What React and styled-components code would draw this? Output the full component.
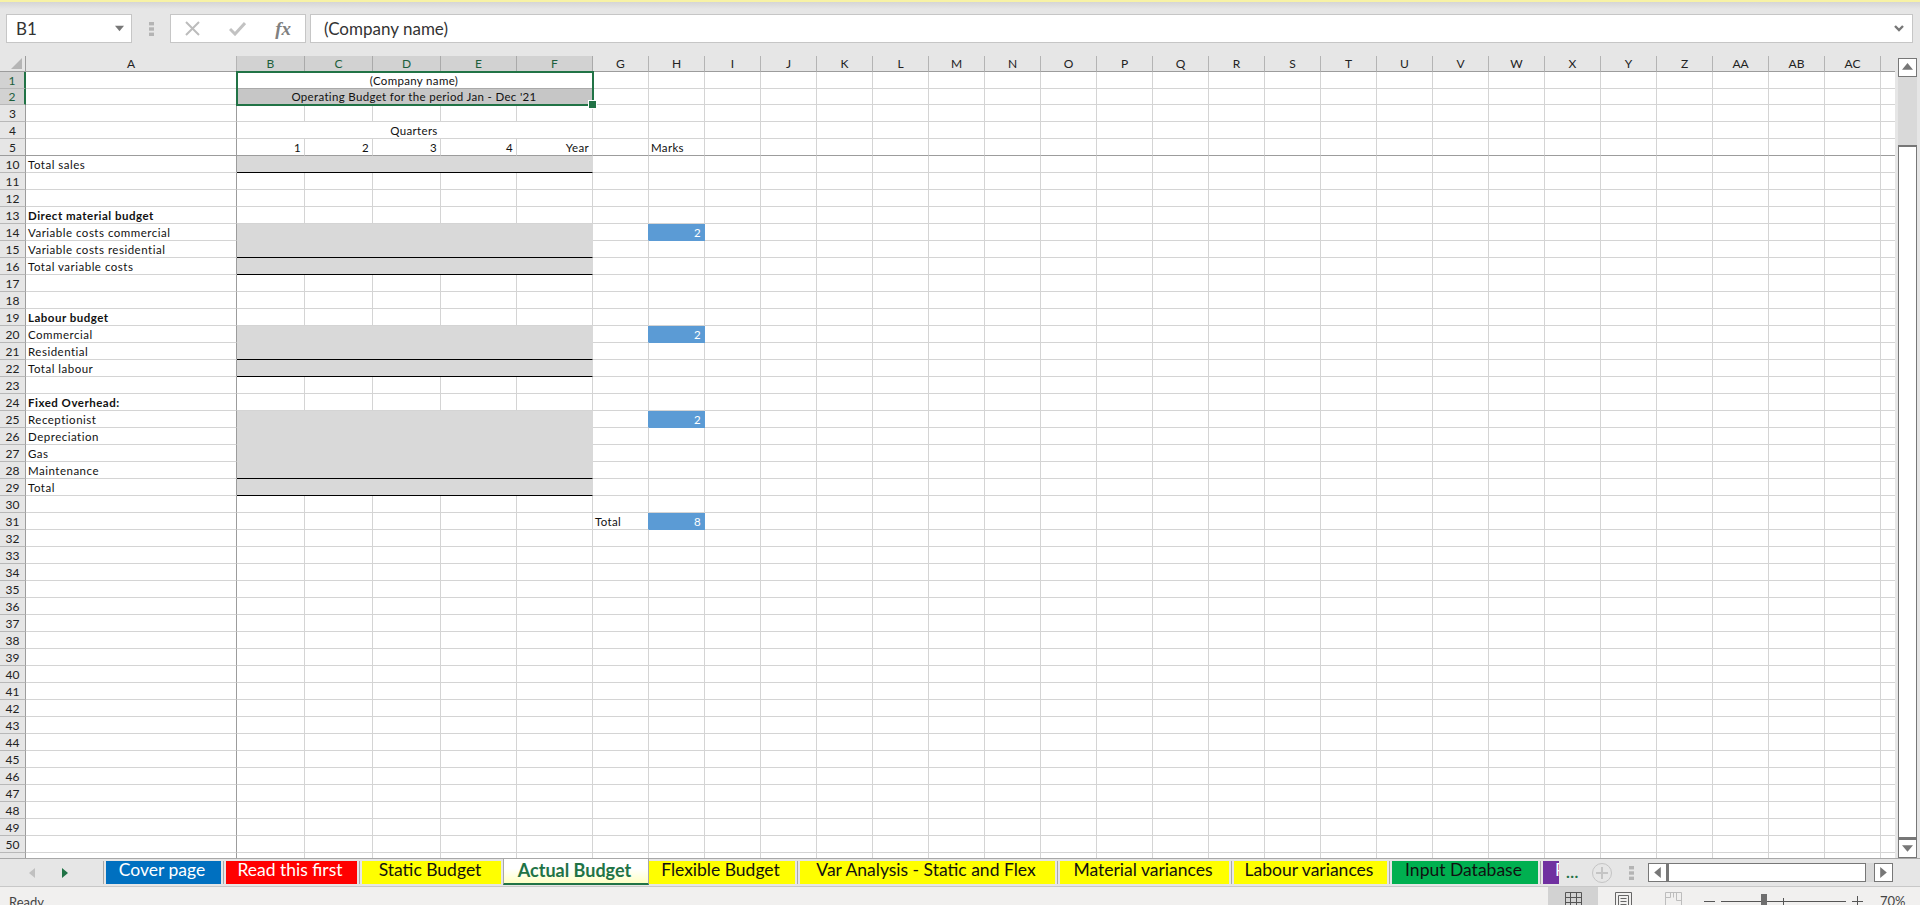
import React from "react"
import styled, { createGlobalStyle } from "styled-components"

const GlobalStyle = createGlobalStyle`
  html, body {
    margin: 0;
    padding: 0;
    background: #e6e6e6;
  }
  * {
    box-sizing: border-box;
  }
`

const GREEN = "#217346"
const GRID = "#d4d4d4"
const FREEZE = "#9c9c9c"
const FILL = "#d9d9d9"
const BLUE = "#5b9bd5"
const FONT = `Lato, "Open Sans", "Liberation Sans", sans-serif`

const COLUMNS = [
  ["A", 211], ["B", 68], ["C", 68], ["D", 68], ["E", 76], ["F", 76],
  ...["G", "H", "I", "J", "K", "L", "M", "N", "O", "P", "Q", "R", "S", "T", "U", "V", "W", "X", "Y", "Z", "AA", "AB", "AC"].map((n) => [n, 56]),
  ["", 15],
]
const ROWS = [1, 2, 3, 4, 5]
for (let r = 10; r <= 51; r++) ROWS.push(r)

const SELECTED_COLS = ["B", "C", "D", "E", "F"]
const FILL_ROWS = [10, 14, 15, 16, 20, 21, 22, 25, 26, 27, 28, 29]
const RULE_ROWS = [10, 15, 16, 21, 22, 28, 29]
const BOLD_ROWS = [13, 19, 24]
const MARK_ROWS = [14, 20, 25, 31]

const CONTENT = {
  A10: "Total sales",
  A13: "Direct material budget",
  A14: "Variable costs commercial",
  A15: "Variable costs residential",
  A16: "Total variable costs",
  A19: "Labour budget",
  A20: "Commercial",
  A21: "Residential",
  A22: "Total labour",
  A24: "Fixed Overhead:",
  A25: "Receptionist",
  A26: "Depreciation",
  A27: "Gas",
  A28: "Maintenance",
  A29: "Total",
  B5: "1",
  C5: "2",
  D5: "3",
  E5: "4",
  F5: "Year",
  H5: "Marks",
  G31: "Total",
  H14: "2",
  H20: "2",
  H25: "2",
  H31: "8",
}
const MERGED = {
  1: { text: "(Company name)", bottom: "#a9a9a9" },
  2: { text: "Operating Budget for the period Jan - Dec '21", fill: "#c6c6c6" },
  4: { text: "Quarters" },
}

const TABS = [
  { name: "Cover page", bg: "#0070c0", color: "#fff", width: 115 },
  { name: "Read this first", bg: "#ff0000", color: "#fff", width: 131 },
  { name: "Static Budget", bg: "#ffff00", color: "#111", width: 139 },
  { name: "Actual Budget", active: true, width: 146 },
  { name: "Flexible Budget", bg: "#ffff00", color: "#111", width: 146, noSep: true },
  { name: "Var Analysis - Static and Flex", bg: "#ffff00", color: "#111", width: 255 },
  { name: "Material variances", bg: "#ffff00", color: "#111", width: 169 },
  { name: "Labour variances", bg: "#ffff00", color: "#111", width: 153 },
  { name: "Input Database", bg: "#00b050", color: "#111", width: 146 },
  { name: "Provisions", bg: "#7030a0", color: "#fff", width: 16, clipped: true },
]

const Page = styled.div`
  width: 1920px;
  height: 905px;
  overflow: hidden;
  display: flex;
  flex-direction: column;
  background: #e6e6e6;
  font-family: ${FONT};
`

const FormulaBar = styled.div`
  height: 56px;
  flex: none;
  display: flex;
  align-items: flex-start;
  padding: 12px 7px 0 6px;
  border-top: 2px solid #f7f2a6;
  background: linear-gradient(#d5d5d5 0, #e6e6e6 7px);
`

const WhiteBox = styled.div`
  height: 29px;
  background: #fff;
  border: 1px solid #c6c6c6;
  display: flex;
  align-items: center;
`

const NameBox = styled(WhiteBox)`
  width: 126px;
  padding: 0 7px 0 9px;
  justify-content: space-between;
  font-size: 17px;
  color: #333;
`

const Grip = styled.svg`
  width: 5px;
  height: 14px;
  fill: #b4b4b4;
  flex: none;
  display: block;
`

const BarGrip = styled(Grip)`
  margin: 8px 16px 0 17px;
`

const FxBox = styled(WhiteBox)`
  width: 136px;
  margin-right: 4px;
  padding: 0 14px 0 14px;
  justify-content: space-between;
`

const FxText = styled.span`
  font-family: "Liberation Serif", serif;
  font-style: italic;
  font-weight: 700;
  font-size: 19px;
  color: #808080;
`

const FormulaInput = styled(WhiteBox)`
  flex: 1;
  padding: 0 8px 0 13px;
  justify-content: space-between;
  font-size: 17px;
  color: #333;
`

const Sheet = styled.div`
  height: 802px;
  flex: none;
  display: flex;
`

const GridArea = styled.div`
  width: 1895px;
  height: 802px;
  overflow: hidden;
`

const Grid = styled.div`
  position: relative;
  display: grid;
  grid-template-columns: 26px ${COLUMNS.map((c) => c[1] + "px").join(" ")};
  grid-template-rows: 16px 17px 16px ${ROWS.slice(2).map(() => "17px").join(" ")};
  background: #fff;
  font-size: 11.5px;
  color: #111;
`

const Corner = styled.div`
  background: #e6e6e6;
  border-right: 1px solid ${FREEZE};
  border-bottom: 1px solid ${FREEZE};
  display: flex;
  align-items: flex-end;
  justify-content: flex-end;
  padding: 0 3px 2px 0;
`

const ColHead = styled.div`
  background: ${(p) => (p.$selected ? "#d2d2d2" : "#e6e6e6")};
  color: ${(p) => (p.$selected ? "#1d5f3c" : "#222")};
  border-right: 1px solid ${(p) => (p.$selected ? "#aaa" : "#b4b4b4")};
  border-bottom: 1px solid ${FREEZE};
  display: flex;
  align-items: center;
  justify-content: center;
  font-size: 12px;
`

const RowHead = styled.div`
  background: ${(p) => (p.$selected ? "#d2d2d2" : "#e6e6e6")};
  color: ${(p) => (p.$selected ? "#1d5f3c" : "#222")};
  border-right: ${(p) => (p.$selected ? `2px solid ${GREEN}` : `1px solid ${FREEZE}`)};
  border-bottom: 1px solid ${(p) => (p.$freeze ? FREEZE : "#b8b8b8")};
  display: flex;
  align-items: center;
  justify-content: center;
  font-size: 12px;
`

const Cell = styled.div`
  background: ${(p) => p.$bg || "#fff"};
  color: ${(p) => (p.$mark ? "#fff" : "#111")};
  border-right: 1px solid ${(p) => p.$right};
  border-bottom: 1px solid ${(p) => p.$bottom};
  font-weight: ${(p) => (p.$bold ? 700 : 400)};
  display: flex;
  align-items: center;
  justify-content: ${(p) => p.$justify || "flex-start"};
  padding: 0 3px 0 2px;
  white-space: nowrap;
  overflow: visible;
  letter-spacing: ${(p) => (p.$label ? "0.5px" : "0.33px")};
  ${(p) => p.$span && `grid-column: span ${p.$span};`}
`

// out of flow, so it takes the tracks of B1:F2 without pushing the cells
const Selection = styled.div`
  position: absolute;
  grid-column: 3 / 8;
  grid-row: 2 / 4;
  inset: -1px;
  border: 2px solid ${GREEN};
  z-index: 2;
`

const FillHandle = styled.span`
  position: absolute;
  right: -4px;
  bottom: -4px;
  width: 7px;
  height: 7px;
  background: ${GREEN};
  outline: 1px solid #fff;
`

const ScrollRail = styled.div`
  width: 25px;
  display: flex;
  flex-direction: column;
  padding: 2px 3px 0 3px;
`

const ScrollButton = styled.div`
  width: 19px;
  height: 19px;
  flex: none;
  background: #fff;
  border: 1px solid #777;
  display: flex;
  align-items: center;
  justify-content: center;
`

const ScrollTrack = styled.div`
  height: 68px;
  flex: none;
  background: #d9d9d9;
`

const ScrollThumb = styled.div`
  height: 694px;
  flex: none;
  background: #fff;
  border: 1px solid #777;
  border-width: 2px 1px;
`

const TabStrip = styled.div`
  height: 29px;
  flex: none;
  display: flex;
  align-items: flex-start;
  border-top: 1px solid #a8a8a8;
  border-bottom: 1px solid #c8c8c8;
  background: #e6e6e6;
`

const TabNav = styled.div`
  width: 103px;
  height: 27px;
  flex: none;
  display: flex;
  align-items: center;
  padding-left: 27px;
  gap: 23px;
`

const Tabs = styled.div`
  display: flex;
  align-items: flex-start;
  gap: 2px;
  padding-top: 2px;
  width: 1459px;
  flex: none;
`

const TabSep = styled.span`
  width: 1px;
  height: 23px;
  flex: none;
  background: #a8a8a8;
`

const Tab = styled.div`
  width: ${(p) => p.$w}px;
  height: 23px;
  flex: none;
  background: ${(p) => p.$bg};
  color: ${(p) => p.$color};
  font-size: 17.5px;
  line-height: 18px;
  overflow: hidden;
  white-space: nowrap;
  padding: ${(p) => (p.$clipped ? "0 0 0 12px" : "0 3px 0 0")};
  text-align: ${(p) => (p.$clipped ? "left" : "center")};
`

const ActiveTab = styled.div`
  width: ${(p) => p.$w}px;
  height: 26px;
  margin: -2px -2px 0 0;
  padding-right: 3px;
  flex: none;
  background: linear-gradient(#fff 40%, #ffffc4);
  border-left: 1px solid #a8a8a8;
  border-right: 1px solid #a8a8a8;
  border-bottom: 2px solid ${GREEN};
  color: ${GREEN};
  font-weight: 700;
  font-size: 18px;
  line-height: 22px;
  text-align: center;
  white-space: nowrap;
`

const MoreTabs = styled.span`
  width: 19px;
  padding: 0 0 0 4px;
  flex: none;
  color: ${GREEN};
  font-weight: 700;
  font-size: 16px;
  line-height: 26px;
  letter-spacing: 0.5px;
`

const StripTools = styled.div`
  display: flex;
  align-items: center;
  height: 27px;
  flex: none;
`

const AddSheet = styled.div`
  width: 20px;
  height: 20px;
  margin-left: 11px;
  border: 1px solid #c4c4c4;
  border-radius: 50%;
  display: flex;
  align-items: center;
  justify-content: center;
`

const StripGrip = styled(Grip)`
  margin: 0 14px 0 17px;
`

const HScroll = styled.div`
  width: 245px;
  display: flex;
  align-items: center;
`

const HThumb = styled.div`
  width: 199px;
  height: 19px;
  flex: none;
  background: #fff;
  border: 1px solid #777;
  border-left-width: 2px;
`

const HTrack = styled.div`
  width: 8px;
  height: 19px;
  flex: none;
  background: #d9d9d9;
`

const StatusBar = styled.div`
  height: 24px;
  flex: none;
  display: flex;
  align-items: flex-start;
  justify-content: space-between;
  background: #f1f0ef;
  color: #444;
  font-size: 13px;
`

const Ready = styled.span`
  padding: 7px 0 0 9px;
`

const StatusTools = styled.div`
  display: flex;
  align-items: flex-start;
`

const ViewButton = styled.div`
  width: 50px;
  height: 24px;
  background: ${(p) => (p.$active ? "#d2d2d2" : "transparent")};
  display: flex;
  justify-content: center;
  padding-top: 5px;
`

const Zoomer = styled.div`
  width: 222px;
  display: flex;
  align-items: center;
  height: 24px;
  padding: 4px 0 0 6px;
`

const ZoomSign = styled.span`
  width: 11px;
  height: 1px;
  background: #555;
  flex: none;
  position: relative;
  ${(p) =>
    p.$plus &&
    `&::after {
      content: "";
      position: absolute;
      left: 5px;
      top: -5px;
      width: 1px;
      height: 11px;
      background: #555;
    }`}
`

const ZoomSlider = styled.div`
  width: 125px;
  height: 1px;
  background: #555;
  margin: 0 6px;
  position: relative;
  flex: none;
`

const SliderThumb = styled.span`
  position: absolute;
  left: 40px;
  top: -7px;
  width: 6px;
  height: 14px;
  background: #6e6e6e;
`

const SliderTick = styled.span`
  position: absolute;
  left: 62px;
  top: -3px;
  width: 1px;
  height: 7px;
  background: #555;
`

const ZoomValue = styled.span`
  margin-left: 17px;
  font-size: 13px;
`

const Triangle = ({ dir, color = "#777", size = 8 }) => {
  const points = {
    up: "0,7 5,1 10,7",
    down: "0,2 10,2 5,8",
    left: "8,0 8,10 2,5",
    right: "2,0 2,10 8,5",
  }
  return (
    <svg width={size} height={size} viewBox="0 0 10 10" style={{ display: "block", flex: "none" }}>
      <polygon points={points[dir]} fill={color} />
    </svg>
  )
}

const GripDots = ({ as: Comp = BarGrip }) => (
  <Comp viewBox="0 0 5 14">
    <rect width="5" height="3.4" />
    <rect y="5.3" width="5" height="3.4" />
    <rect y="10.6" width="5" height="3.4" />
  </Comp>
)

const CrossIcon = () => (
  <svg width="15" height="15" viewBox="0 0 15 15">
    <path d="M1 1 L14 14 M14 1 L1 14" stroke="#bcbcbc" strokeWidth="2" fill="none" />
  </svg>
)

const CheckIcon = () => (
  <svg width="17" height="15" viewBox="0 0 17 15">
    <path d="M1 8 L6 13 L16 2" stroke="#c2c2c2" strokeWidth="3" fill="none" />
  </svg>
)

const ChevronDown = () => (
  <svg width="10" height="8" viewBox="0 0 10 8">
    <path d="M1 1 L5 5 L9 1" stroke="#777" strokeWidth="2.4" fill="none" />
  </svg>
)

const PlusIcon = () => (
  <svg width="12" height="12" viewBox="0 0 12 12">
    <path d="M6 0 V12 M0 6 H12" stroke="#c4c4c4" strokeWidth="2" fill="none" />
  </svg>
)

const NormalViewIcon = () => (
  <svg width="17" height="16" viewBox="0 0 17 16" fill="none" stroke="#555">
    <path d="M.5 .5 H16.5 V15.5 H.5 Z M.5 5.5 H16.5 M.5 10.5 H16.5 M5.5 .5 V15.5 M11.5 .5 V15.5" />
  </svg>
)

const PageLayoutIcon = () => (
  <svg width="17" height="16" viewBox="0 0 17 16" fill="none" stroke="#666">
    <path d="M.5 .5 H16.5 V15.5 H.5 Z" />
    <path d="M3.5 3.5 H13.5 V15.5 H3.5 Z M5.5 6.5 H11.5 M5.5 9.5 H11.5 M5.5 12.5 H11.5" />
  </svg>
)

const PageBreakIcon = () => (
  <svg width="17" height="16" viewBox="0 0 17 16" fill="none" stroke="#bdbdbd">
    <path d="M.5 .5 H16.5 V15.5 H.5 Z M.5 5.5 H5.5 V.5 M11.5 .5 V8.5 H16.5 M8.5 .5 V5.5" />
  </svg>
)

const cellProps = (col, row) => {
  const isMark = col === "H" && MARK_ROWS.includes(row)
  let bottom = GRID
  if (row === 5) bottom = FREEZE
  if (isMark) bottom = BLUE
  let right = GRID
  if (isMark || (col === "G" && MARK_ROWS.includes(row))) right = BLUE
  if (col === "A" || col === "") right = FREEZE
  const numeric = isMark || (row === 5 && SELECTED_COLS.includes(col))
  return {
    $bg: isMark ? BLUE : undefined,
    $mark: isMark,
    $right: right,
    $bottom: bottom,
    $label: col === "A",
    $bold: col === "A" && BOLD_ROWS.includes(row),
    $justify: numeric ? "flex-end" : undefined,
    children: CONTENT[col + row],
  }
}

// the cell that stands for B:F on merged and shaded rows
const SpanCell = ({ row }) => {
  const merged = MERGED[row]
  if (merged) {
    return (
      <Cell $span={5} $bg={merged.fill} $right={GRID} $bottom={merged.bottom || GRID} $justify="center">
        {merged.text}
      </Cell>
    )
  }
  return <Cell $span={5} $bg={FILL} $right={FILL} $bottom={RULE_ROWS.includes(row) ? "#000" : FILL} />
}

const SheetRow = ({ row }) => {
  const spans = MERGED[row] || FILL_ROWS.includes(row)
  return (
    <>
      <RowHead $selected={row === 1 || row === 2} $freeze={row === 5}>
        {row}
      </RowHead>
      {COLUMNS.map(([col]) => {
        if (spans && SELECTED_COLS.includes(col)) {
          return col === "B" ? <SpanCell key={col} row={row} /> : null
        }
        return <Cell key={col} {...cellProps(col, row)} />
      })}
    </>
  )
}

const App = () => (
  <>
    <GlobalStyle />
    <Page>
      <FormulaBar>
        <NameBox>
          B1
          <Triangle dir="down" color="#777" size={9} />
        </NameBox>
        <GripDots />
        <FxBox>
          <CrossIcon />
          <CheckIcon />
          <FxText>fx</FxText>
        </FxBox>
        <FormulaInput>
          (Company name)
          <ChevronDown />
        </FormulaInput>
      </FormulaBar>

      <Sheet>
        <GridArea>
          <Grid>
            <Corner>
              <svg width="11" height="11" viewBox="0 0 11 11">
                <polygon points="11,0 11,11 0,11" fill="#b5b5b5" />
              </svg>
            </Corner>
            {COLUMNS.map(([col]) => (
              <ColHead key={col || "end"} $selected={SELECTED_COLS.includes(col)}>
                {col}
              </ColHead>
            ))}
            {ROWS.map((row) => (
              <SheetRow key={row} row={row} />
            ))}
            <Selection>
              <FillHandle />
            </Selection>
          </Grid>
        </GridArea>
        <ScrollRail>
          <ScrollButton>
            <Triangle dir="up" size={11} />
          </ScrollButton>
          <ScrollTrack />
          <ScrollThumb />
          <ScrollButton>
            <Triangle dir="down" size={11} />
          </ScrollButton>
        </ScrollRail>
      </Sheet>

      <TabStrip>
        <TabNav>
          <Triangle dir="left" color="#c0c0c0" size={10} />
          <Triangle dir="right" color={GREEN} size={10} />
        </TabNav>
        <Tabs>
          {TABS.map((tab) =>
            tab.active ? (
              <ActiveTab key={tab.name} $w={tab.width}>
                {tab.name}
              </ActiveTab>
            ) : (
              <React.Fragment key={tab.name}>
                {!tab.noSep && <TabSep />}
                <Tab $w={tab.width} $bg={tab.bg} $color={tab.color} $clipped={tab.clipped}>
                  {tab.name}
                </Tab>
              </React.Fragment>
            )
          )}
        </Tabs>
        <MoreTabs>...</MoreTabs>
        <StripTools>
          <AddSheet>
            <PlusIcon />
          </AddSheet>
          <GripDots as={StripGrip} />
          <HScroll>
            <ScrollButton>
              <Triangle dir="left" size={11} />
            </ScrollButton>
            <HThumb />
            <HTrack />
            <ScrollButton>
              <Triangle dir="right" size={11} />
            </ScrollButton>
          </HScroll>
        </StripTools>
      </TabStrip>

      <StatusBar>
        <Ready>Ready</Ready>
        <StatusTools>
          <ViewButton $active>
            <NormalViewIcon />
          </ViewButton>
          <ViewButton>
            <PageLayoutIcon />
          </ViewButton>
          <ViewButton>
            <PageBreakIcon />
          </ViewButton>
          <Zoomer>
            <ZoomSign />
            <ZoomSlider>
              <SliderThumb />
              <SliderTick />
            </ZoomSlider>
            <ZoomSign $plus />
            <ZoomValue>70%</ZoomValue>
          </Zoomer>
        </StatusTools>
      </StatusBar>
    </Page>
  </>
)

export default App
